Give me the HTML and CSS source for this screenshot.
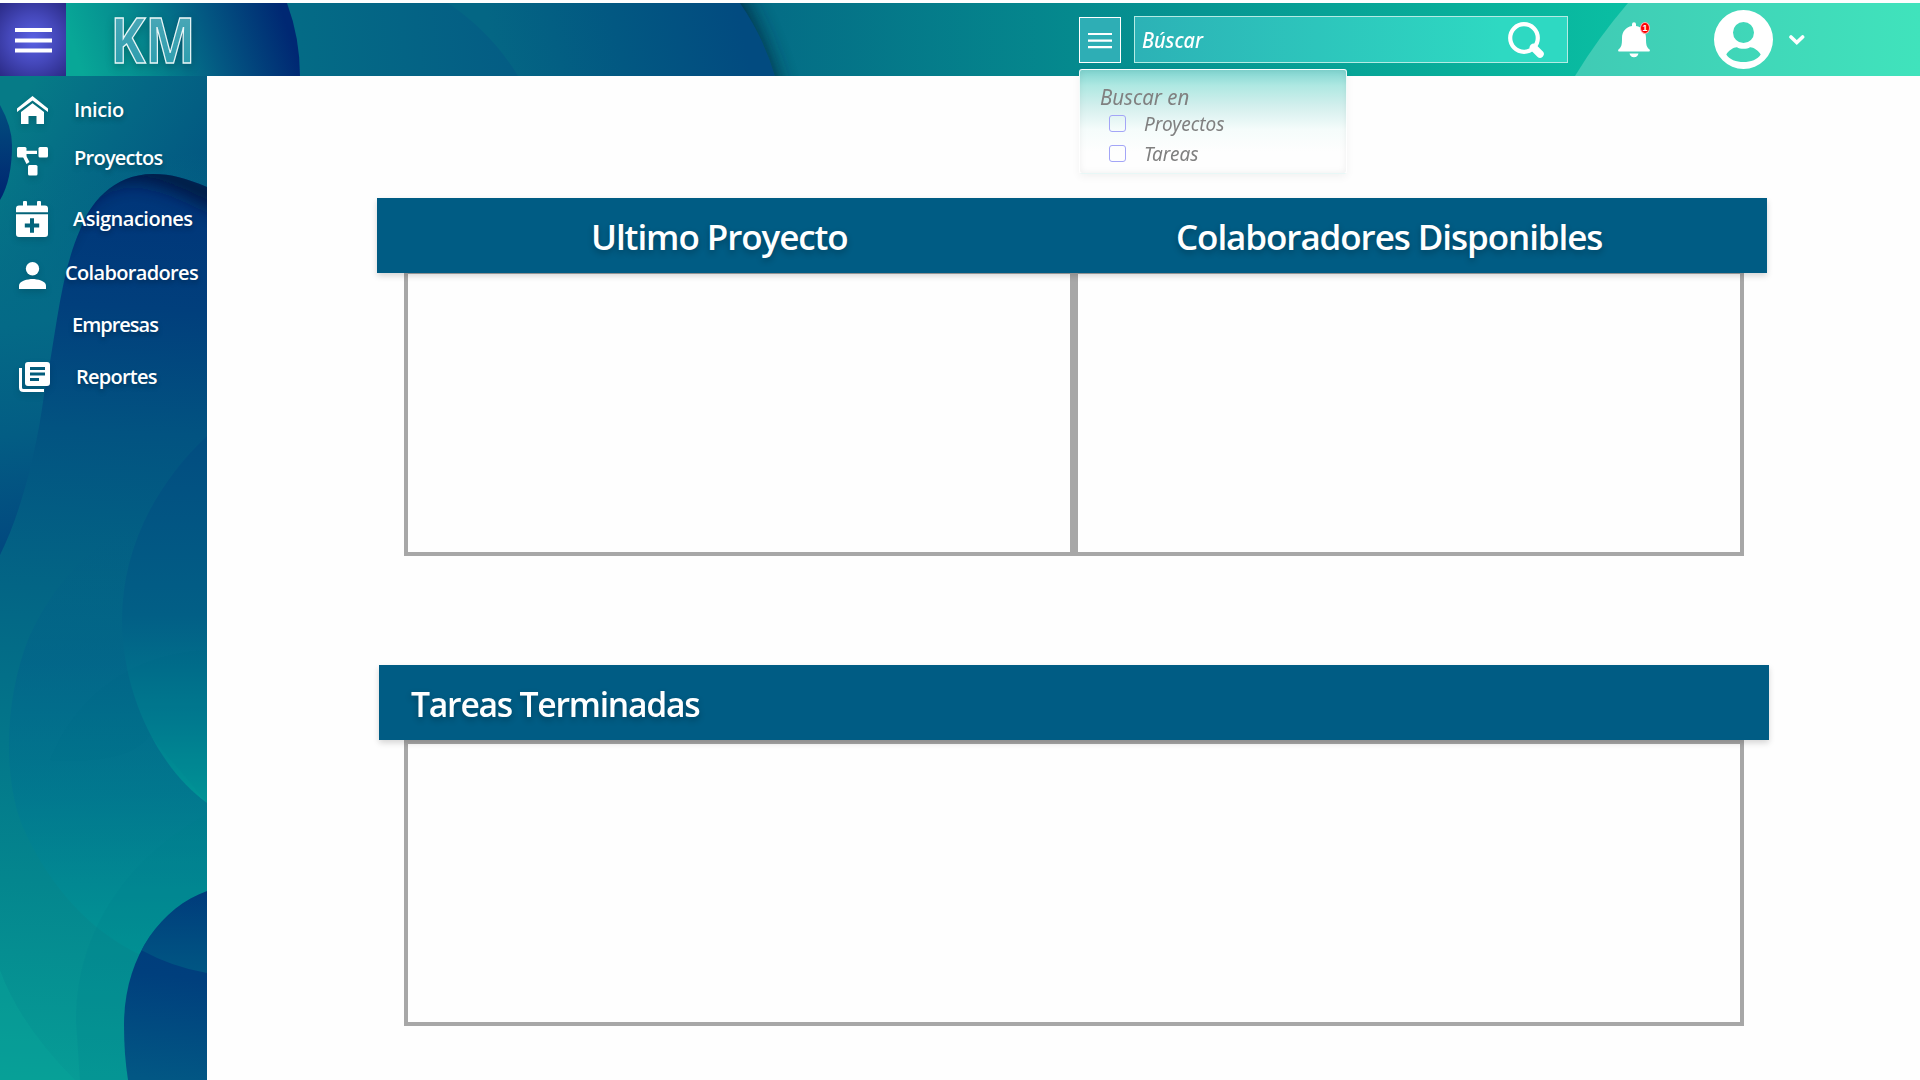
FILE: index.html
```html
<!DOCTYPE html>
<html lang="es">
<head>
<meta charset="utf-8">
<title>KM</title>
<link rel="stylesheet" href="styles.css">
</head>
<body>
<header class="topbar">
  <svg class="backdrop" viewBox="0 3 1920 73" preserveAspectRatio="none" aria-hidden="true">
    <defs>
      <linearGradient id="hBase" gradientUnits="userSpaceOnUse" x1="740" y1="0" x2="1630" y2="0"><stop offset="0" stop-color="#046a85"/><stop offset=".38" stop-color="#058a8e"/><stop offset=".8" stop-color="#08ae9a"/><stop offset="1" stop-color="#0abfa3"/></linearGradient>
      <linearGradient id="hMid" gradientUnits="userSpaceOnUse" x1="500" y1="76" x2="740" y2="20"><stop offset="0" stop-color="#046684"/><stop offset=".5" stop-color="#025882"/><stop offset="1" stop-color="#024b80"/></linearGradient>
      <linearGradient id="hTeal" gradientUnits="userSpaceOnUse" x1="300" y1="40" x2="520" y2="20"><stop offset="0" stop-color="#046b86"/><stop offset="1" stop-color="#045c84"/></linearGradient>
      <linearGradient id="hLeft" gradientUnits="userSpaceOnUse" x1="82" y1="72" x2="280" y2="6"><stop offset="0" stop-color="#08a797"/><stop offset=".3" stop-color="#058a8f"/><stop offset=".65" stop-color="#035782"/><stop offset="1" stop-color="#002873"/></linearGradient>
      <linearGradient id="hRight" gradientUnits="userSpaceOnUse" x1="1580" y1="0" x2="1920" y2="0"><stop offset="0" stop-color="#40cbb5"/><stop offset="1" stop-color="#40e3bc"/></linearGradient>
      <filter id="hBlur" x="-20%" y="-50%" width="140%" height="200%"><feGaussianBlur stdDeviation="10"/></filter>
    </defs>
    <rect y="3" width="1920" height="73" fill="url(#hBase)"/>
    <path d="M400-60H705Q768 20 790 130H400Z" fill="#02283c" opacity=".85" filter="url(#hBlur)"/>
    <path d="M400 3H740Q764 38 775 76H400Z" fill="url(#hMid)"/>
    <path d="M280 3H448Q492 33 518 76H280Z" fill="url(#hTeal)"/>
    <path d="M60 3H287Q300 38 300 76H60Z" fill="url(#hLeft)"/>
    <path d="M1628 3Q1598 38 1575 76H1920V3Z" fill="url(#hRight)"/>
  </svg>
  <button class="menu" aria-label="Menu"><svg width="37" height="25"><path d="M0 2h37M0 12.4h37M0 22.6h37" stroke="#fff" stroke-width="4"/></svg></button>
  <svg class="logo" width="110" height="73" viewBox="0 -4 110 73"><defs><linearGradient id="km" x1="0" y1="0" x2="0" y2="1"><stop offset="0" stop-color="#55abba"/><stop offset="1" stop-color="#249aab"/></linearGradient></defs><text x="4.500" y="56" textLength="85" lengthAdjust="spacingAndGlyphs">KM</text></svg>
  <button class="filter" aria-label="Filtros"><svg width="24" height="16"><path d="M0 1h24M0 7.6h24M0 14.2h24" stroke="#fff" stroke-width="2.200"/></svg></button>
  <div class="search"><span class="ital">Búscar</span>
    <svg width="38" height="38" viewBox="0 0 38 38" fill="none" stroke="#fff"><circle cx="17" cy="17" r="13.8" stroke-width="4.2"/><path d="m26.500 26.500 6.500 6.500" stroke-width="7.500" stroke-linecap="round"/></svg>
  </div>
  <div class="bell"><svg width="32" height="37" viewBox="0 0 32 37" fill="#fff"><path d="M14 4V2.2a2 2 0 0 1 4 0V4c6.500 1 10 6 10 12 0 7 .6 9 3.300 11.300.9.800.7 2.200-.6 2.200H1.300C0 29.500-.2 28.100.7 27.300 3.400 25 4 23 4 16 4 10 7.500 5 14 4ZM11.500 31.500h9a4.600 4.600 0 0 1-9 0Z"/></svg><b>1</b></div>
  <svg class="avatar" width="59" height="59" viewBox="0 0 59 59"><path fill="#fff" fill-rule="evenodd" d="M29.500 0a29.500 29.500 0 1 1 0 59a29.500 29.500 0 1 1 0-59ZM29.500 12A10.500 10.500 0 1 0 29.500 33A10.500 10.500 0 1 0 29.500 12ZM12.300 44.500C18 54.500 41 54.500 46.700 44.500C44.500 40.500 39 37 36 37.300C33 39.300 26 39.300 23 37.300C20 37 14.500 40.500 12.300 44.500Z"/></svg>
  <svg class="chevron" width="16" height="10" viewBox="0 0 16 10"><path d="m2 2 5.800 5.500L13.600 2" fill="none" stroke="#fff" stroke-width="3.600" stroke-linecap="round"/></svg>
  <div class="dropdown">
    <p class="ital">Buscar en</p>
    <label><i></i><span class="ital">Proyectos</span></label>
    <label><i></i><span class="ital">Tareas</span></label>
  </div>
</header>
<div class="body">
  <nav class="sidebar">
    <svg class="backdrop" viewBox="0 76 207 1004" preserveAspectRatio="none" aria-hidden="true">
      <defs>
        <linearGradient id="sTop" gradientUnits="userSpaceOnUse" x1="20" y1="100" x2="190" y2="210"><stop offset="0" stop-color="#067b87"/><stop offset=".5" stop-color="#046785"/><stop offset="1" stop-color="#025681"/></linearGradient>
        <linearGradient id="sLeft" gradientUnits="userSpaceOnUse" x1="0" y1="180" x2="50" y2="540"><stop offset="0" stop-color="#047488" stop-opacity="0"/><stop offset=".4" stop-color="#046a87"/><stop offset=".7" stop-color="#035d84"/><stop offset="1" stop-color="#02497f"/></linearGradient>
        <linearGradient id="sBody" gradientUnits="userSpaceOnUse" x1="110" y1="190" x2="60" y2="1080"><stop offset="0" stop-color="#003579"/><stop offset=".13" stop-color="#013f7c"/><stop offset=".27" stop-color="#025381"/><stop offset=".45" stop-color="#036585"/><stop offset=".62" stop-color="#03768a"/><stop offset=".78" stop-color="#04868e"/><stop offset="1" stop-color="#079c96"/></linearGradient>
        <linearGradient id="sBlob" gradientUnits="userSpaceOnUse" x1="0" y1="430" x2="0" y2="800"><stop offset="0" stop-color="#024c80"/><stop offset=".5" stop-color="#025f86"/><stop offset=".8" stop-color="#007d90"/><stop offset="1" stop-color="#009596"/></linearGradient>
        <linearGradient id="sHaze" gradientUnits="userSpaceOnUse" x1="0" y1="530" x2="0" y2="970"><stop offset="0" stop-color="#025c85" stop-opacity="0"/><stop offset=".3" stop-color="#02628a"/><stop offset=".6" stop-color="#007590"/><stop offset="1" stop-color="#009d99"/></linearGradient>
        <linearGradient id="sNavy" gradientUnits="userSpaceOnUse" x1="180" y1="890" x2="160" y2="1080"><stop offset="0" stop-color="#003a7b"/><stop offset=".45" stop-color="#003f7d"/><stop offset="1" stop-color="#025784"/></linearGradient>
        <linearGradient id="sDot" x1="0" y1="0" x2="0" y2="1"><stop offset="0" stop-color="#025b83"/><stop offset="1" stop-color="#002570"/></linearGradient>
        <linearGradient id="sOver" gradientUnits="userSpaceOnUse" x1="0" y1="890" x2="0" y2="973"><stop offset="0" stop-color="#005683" stop-opacity="0"/><stop offset="1" stop-color="#005683"/></linearGradient>
        <filter id="sBlur" x="-30%" y="-30%" width="160%" height="160%"><feGaussianBlur stdDeviation="9"/></filter>
        <clipPath id="cBody"><path d="M207 187C185 178 172 174 153 174C112 174 89 205 80 230C60 275 57 330 44 395C36 455 20 515 0 555V1080H207Z"/></clipPath>
        <clipPath id="cNavy"><path d="M207 891C160 908 124 958 124 1025Q124 1055 128 1080H207Z"/></clipPath>
      </defs>
      <rect y="76" width="207" height="600" fill="url(#sTop)"/>
      <rect y="76" width="207" height="500" fill="url(#sLeft)"/>
      <path d="M-20 76Q12 115 12 145Q12 180 0 200H-20Z" fill="url(#sDot)"/>
      <g clip-path="url(#cBody)">
        <rect y="170" width="207" height="910" fill="url(#sBody)"/>
        <path d="M50 240C80 170 120 165 153 172C180 178 200 190 225 202" fill="none" stroke="#00143a" stroke-width="24" opacity=".85" filter="url(#sBlur)"/>
        <path d="M207 500C120 510 60 570 30 635C5 695 3 770 20 820C50 895 115 965 207 973Z" fill="url(#sHaze)" opacity=".6"/>
        <path d="M207 436C150 490 122 555 122 620C122 690 155 765 207 803Z" fill="url(#sBlob)"/>
        <path d="M207 650C125 655 75 700 50 760Q130 765 150 735L207 803Z" fill="#006088" opacity=".06"/>
        <path d="M207 815C130 855 76 930 76 1020L80 1080H207Z" fill="#007f8c" opacity=".22"/>
        <path d="M0 970Q20 1025 75 1080H0Z" fill="#0aa89b" opacity=".3"/>
      </g>
      <g clip-path="url(#cNavy)"><rect y="885" width="207" height="200" x="100" fill="url(#sNavy)"/><path d="M100 880H207V973Q172 967 141 950Z" fill="url(#sOver)"/></g>
    </svg>
    <a class="item inicio"><svg width="31" height="28" viewBox="0 0 31 28" fill="#fff"><path d="M15.500 0 31 12.500v3.500L15.500 4.500 0 16v-3.500Z"/><path d="M15.500 7.200 27 16v12h-7.500v-8h-8v8H4V16Z"/></svg><span>Inicio</span></a>
    <a class="item proyectos"><svg width="31" height="29" viewBox="0 0 31 29" fill="#fff"><rect width="9.500" height="10.500" rx="1.500"/><rect x="21.500" width="9.500" height="10.500" rx="1.500"/><rect x="11" y="18" width="9.500" height="10.500" rx="1.500"/><path d="M8 3.800h12v3.200H8ZM6 10l3-1.500L12.500 15l-3 2Z"/></svg><span>Proyectos</span></a>
    <a class="item asignaciones"><svg width="32" height="36" viewBox="0 0 32 36"><path fill="#fff" fill-rule="evenodd" d="M0 11.200V7.500Q0 4.500 3 4.500H7V1Q7 0 8 0H10Q11 0 11 1V4.500H21V1Q21 0 22 0H24Q25 0 25 1V4.500H29Q32 4.500 32 7.500V11.200ZM0 13.300H32V33Q32 36 29 36H3Q0 36 0 33ZM14 17.300V22.500H8.800V26.500H14V31.700H18V26.500H23.200V22.500H18V17.300Z"/></svg><span>Asignaciones</span></a>
    <a class="item colaboradores"><svg width="27" height="27" viewBox="0 0 27 27" fill="#fff"><circle cx="13.500" cy="6.700" r="6.700"/><path d="M0 27v-3.500C0 19 9 17 13.500 17S27 19 27 23.500V27Z"/></svg><span>Colaboradores</span></a>
    <a class="item empresas"><span>Empresas</span></a>
    <a class="item reportes"><svg width="31" height="30" viewBox="0 0 31 30"><path d="M1.500 6v19.500q0 3 3 3H25" fill="none" stroke="#fff" stroke-width="3"/><path fill="#fff" fill-rule="evenodd" d="M9 0H28Q31 0 31 3V21Q31 24 28 24H9Q6 24 6 21V3Q6 0 9 0ZM11 5V8H26V5ZM11 10.500V13.500H26V10.500ZM11 16V19H20V16Z"/></svg><span>Reportes</span></a>
  </nav>
  <main class="content">
    <section class="panel">
      <h2 class="bar split"><span class="ultimo">Ultimo Proyecto</span><span class="disponibles">Colaboradores Disponibles</span></h2>
      <div class="boxes"><div class="box"></div><div class="box"></div></div>
    </section>
    <section class="panel second">
      <h2 class="bar"><span class="terminadas">Tareas Terminadas</span></h2>
      <div class="boxes"><div class="box"></div></div>
    </section>
  </main>
</div>
</body>
</html>
```
FILE: styles.css
```css
* { box-sizing: border-box; }
body { margin: 0; width: 1920px; height: 1080px; padding-top: 3px; overflow: hidden; background: #fefefe; font-family: "Open Sans", "Noto Sans", sans-serif; color: #fff; }
button { padding: 0; font: inherit; color: inherit; }
.backdrop { position: absolute; inset: 0; width: 100%; height: 100%; z-index: -1; }
.topbar { position: relative; z-index: 2; height: 73px; display: flex; align-items: center; isolation: isolate; }
.menu { width: 66px; height: 73px; border: 0; display: flex; align-items: center; justify-content: center; padding-left: 1px; padding-top: 2px; background: radial-gradient(circle at 50% 50%, #5a61e4 0, #4447b9 50%, #2a2a85 100%); }
.logo { margin-left: 40px; flex: none; overflow: visible; }
.logo text { font: 700 63px "Open Sans", sans-serif; fill: url(#km); stroke: #e9f6f7; stroke-width: 1.4px; filter: drop-shadow(0 3px 4px #0003); }
.filter { margin-left: 863px; width: 42px; height: 46px; border: 1px solid #fff; background: #2eaeb5; display: flex; align-items: center; justify-content: center; padding-top: 2px; }
.search { margin-left: 13px; width: 434px; height: 47px; border: 1px solid #b5ebe4; background: linear-gradient(90deg, #2cb2b6, #2ed9c2 85%); display: flex; align-items: center; justify-content: space-between; padding: 0 22px 0 7px; font-size: 22px; }
.ital { font-family: "Noto Sans", "Open Sans", sans-serif; font-style: italic; display: inline-block; transform: scaleX(.95); transform-origin: 0 50%; white-space: nowrap; }
.search .ital { font-weight: 500; transform: scaleX(.9); margin-top: -2px; }
.bell { position: relative; margin-left: 50px; width: 32px; height: 37px; margin-top: 2px; }
.bell svg { display: block; }
.bell b { position: absolute; left: 22px; top: 0; width: 10px; height: 12px; border-radius: 50%; background: #f00; border: 1px solid #ffb3b3; font: bold 9px/10px "Liberation Sans", sans-serif; text-align: center; }
.avatar { margin-left: 64px; }
.chevron { margin-left: 16px; }
.dropdown { position: absolute; left: 1079px; top: 66px; width: 268px; height: 105px; padding: 13px 20px 0; border: 1px solid #ffffffd0; border-radius: 3px; background: linear-gradient(#80d5d0, #aee8e2 15%, #d3efed 35%, #f5fcfb 58%, #fefefe 80%); box-shadow: 0 3px 9px #0000000d, inset 0 0 7px #00000010; color: #808080; }
.dropdown p { margin: 0; display: block; font-size: 21.500px; line-height: 28px; }
.dropdown label { display: flex; align-items: center; height: 35px; padding-left: 9px; font-size: 20px; }
.dropdown label:first-of-type { height: 25px; }
.dropdown i { width: 17px; height: 17px; margin-right: 18px; border: 1px solid #a3a5f7; border-radius: 3px; }
.body { display: flex; height: 1004px; }
.sidebar { position: relative; z-index: 0; width: 207px; display: flex; flex-direction: column; padding-top: 8px; overflow: hidden; }
.item { display: flex; align-items: center; padding-left: 17px; font-size: 20px; line-height: 28px; font-weight: 600; letter-spacing: -.65px; text-shadow: 0 3px 5px #0004; white-space: nowrap; }
.item svg { flex: none; filter: drop-shadow(0 3px 3px #0002); }
.inicio { height: 51px; letter-spacing: -.4px; }
.inicio span { margin-left: 26px; }
.proyectos { height: 53px; letter-spacing: -.75px; }
.proyectos span { margin-left: 26px; padding-bottom: 8px; }
.asignaciones { height: 62px; padding-left: 16px; letter-spacing: -.5px; }
.asignaciones span { margin-left: 25px; }
.colaboradores { height: 51px; padding-left: 19px; }
.colaboradores span { margin-left: 19px; padding-bottom: 5px; }
.empresas { height: 50px; padding: 0 0 2px 72px; letter-spacing: -1px; }
.reportes { height: 53px; padding-left: 19px; padding-bottom: 2px; letter-spacing: -.75px; }
.reportes span { margin-left: 26px; }
.content { flex: 1; padding: 122px 0 0 170px; }
.panel { width: 1390px; }
.second { margin: 109px 0 0 2px; }
.bar { position: relative; z-index: 1; margin: 0; height: 75px; display: flex; align-items: center; padding: 2px 0 0 32px; background: #005c84; box-shadow: 0 3px 6px #00000029; font-size: 35px; line-height: 44px; font-weight: 600; letter-spacing: -1.07px; text-shadow: 0 3px 6px #0004; white-space: nowrap; }
.split { padding-left: 214px; }
.split span { flex: none; }
.ultimo { width: 585px; }
.terminadas { letter-spacing: -1.3px; transform: scaleX(.963); transform-origin: 0 50%; }
.boxes { display: flex; width: 1340px; height: 286px; margin: -3px 0 0 27px; }
.box { flex: 1; border: 4px solid #a7a7a7; }
.second .boxes { margin: 0 0 0 25px; }
```
